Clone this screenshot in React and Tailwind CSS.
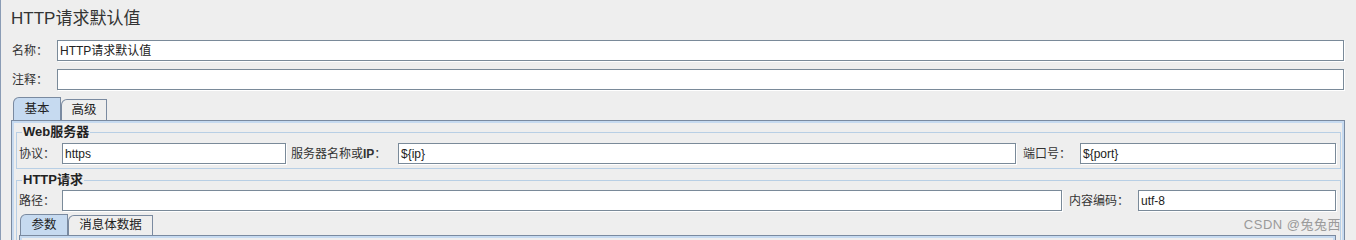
import React from "react";

const font = { fontFamily: '"Liberation Sans", "Noto Sans CJK SC", sans-serif' };

function Field({ value = "", className = "" }) {
  return (
    <div
      className={`h-[21px] bg-white border border-[#7a8a99] shadow-[1px_1px_0_#ffffff] flex items-center pl-[2px] text-[12px] text-[#222] leading-none ${className}`}
    >
      {value}
    </div>
  );
}

function Tab({ label, selected, w }) {
  return (
    <div
      className={`flex items-center justify-center border-t border-l border-r border-[#7a8aa0] rounded-tl-[6px] text-[12.5px] text-[#222] ${
        selected ? "h-[23px] bg-[#c6daf0]" : "h-[21px] bg-[#eeeeee]"
      } ${w}`}
    >
      {label}
    </div>
  );
}

export default function App() {
  return (
    <div
      style={font}
      className="relative w-[1356px] h-[240px] overflow-hidden bg-[#eeeeee] border-l border-[#8a9cb5] text-[#333]"
    >
      <div className="h-[40px] pt-[9px] pl-[10px] text-[17px] leading-[20px] text-[#333]">
        HTTP请求默认值
      </div>

      <div className="flex items-center h-[21px] pl-[11px] pr-[12px]">
        <div className="w-[45px] text-[12px]">名称：</div>
        <Field value="HTTP请求默认值" className="flex-1" />
      </div>
      <div className="flex items-center h-[21px] mt-[8px] pl-[11px] pr-[12px]">
        <div className="w-[45px] text-[12px]">注释：</div>
        <Field className="flex-1" />
      </div>

      <div className="flex items-end mt-[7px] ml-[12px] h-[23px]">
        <Tab label="基本" selected w="w-[48px]" />
        <Tab label="高级" w="w-[46px]" />
      </div>

      <div className="ml-[10px] mr-[11px] h-[200px] border border-[#7a8aa0] shadow-[inset_0_0_0_2px_#c6daf0] pt-[3px] pl-[4px] pr-[3px]">
        <fieldset className="border border-[#b8cfe5] pl-[2px] pr-[4px] pb-[4px]">
          <legend className="ml-[3px] px-[1px] text-[13px] leading-[16px] font-bold text-[#222]">
            Web服务器
          </legend>
          <div className="flex items-center mt-[3px] text-[12px]">
            <div className="w-[43px]">协议：</div>
            <Field value="https" className="w-[224px]" />
            <div className="w-[112px] pl-[5px] whitespace-nowrap">
              服务器名称或<span className="font-bold">IP</span>：
            </div>
            <Field value="${ip}" className="w-[618px]" />
            <div className="w-[64px] pl-[7px]">端口号：</div>
            <Field value="${port}" className="flex-1" />
          </div>
        </fieldset>

        <fieldset className="mt-[3px] border border-[#b8cfe5] pl-[2px] pr-[4px] h-[80px]">
          <legend className="ml-[3px] px-[1px] text-[13px] leading-[16px] font-bold text-[#222]">
            HTTP请求
          </legend>
          <div className="flex items-center mt-[2px] text-[12px]">
            <div className="w-[43px]">路径：</div>
            <Field className="w-[1000px]" />
            <div className="w-[76px] pl-[7px]">内容编码：</div>
            <Field value="utf-8" className="flex-1" />
          </div>
          <div className="flex items-end mt-[3px] ml-[1px] h-[21px]">
            <div className="flex items-center justify-center h-[21px] w-[48px] bg-[#c6daf0] border-t border-l border-r border-[#7a8aa0] rounded-tl-[6px] text-[12.5px] text-[#222]">
              参数
            </div>
            <div className="flex items-center justify-center h-[20px] w-[85px] bg-[#eeeeee] border-t border-l border-r border-[#7a8aa0] rounded-tl-[6px] text-[12.5px] text-[#222]">
              消息体数据
            </div>
          </div>
          <div className="h-[20px] border border-[#7a8aa0] shadow-[inset_0_0_0_2px_#c6daf0]"></div>
        </fieldset>
      </div>

      <div className="absolute right-[15px] top-[215px] text-[13px] text-[#9a9a9a] tracking-[0.5px]">
        CSDN @兔兔西
      </div>
    </div>
  );
}
